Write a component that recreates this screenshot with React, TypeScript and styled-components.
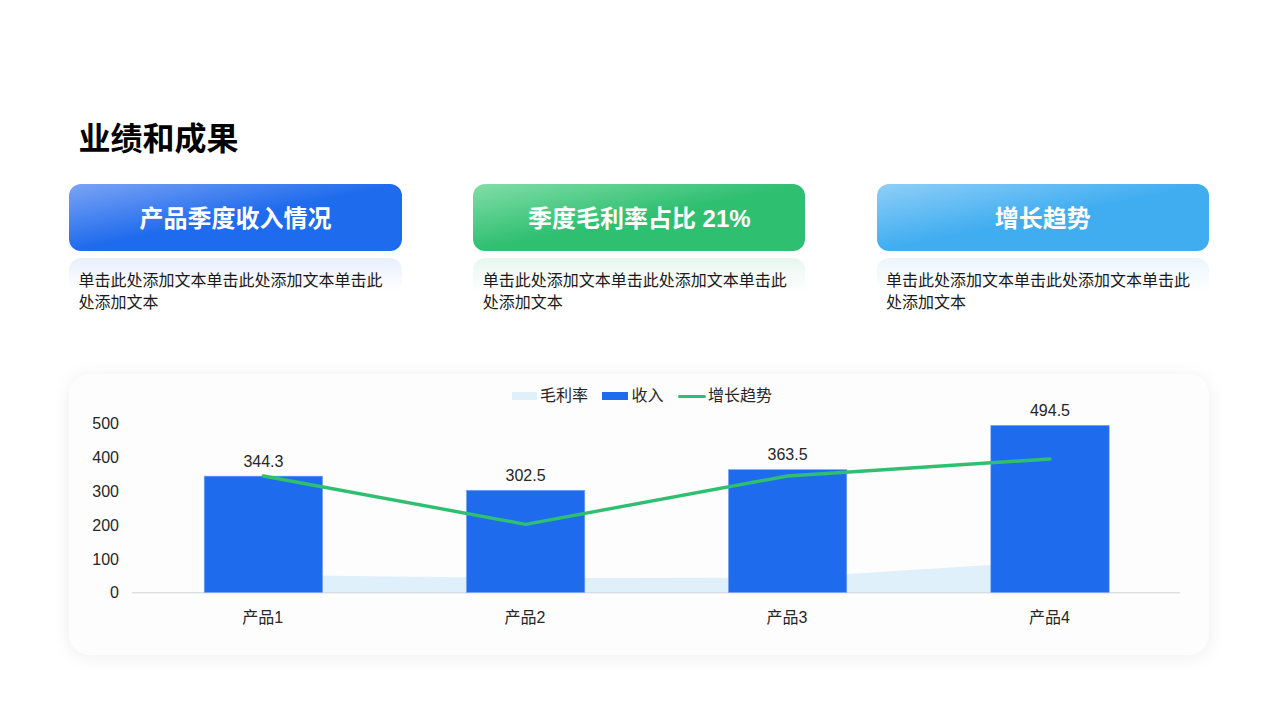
import React from 'react';
import styled, { createGlobalStyle } from 'styled-components';

const FONT = '"Liberation Sans", "Noto Sans CJK SC", sans-serif';

const cards = [
  { title: '产品季度收入情况', from: '#7ba4f5', to: '#1f6bed', tint: '#e8effc' },
  { title: '季度毛利率占比 21%', from: '#82dea8', to: '#2fbf71', tint: '#e9f6f0' },
  { title: '增长趋势', from: '#8fcff7', to: '#40adf1', tint: '#ebf5fd' },
];

const DESC = '单击此处添加文本单击此处添加文本单击此处添加文本';

// chart data, the coordinates below are page pixels
const BASE_Y = 592.5;
const UNIT = 0.338;
const products = [
  { name: '产品1', value: 344.3, cx: 263.4, margin: 575, trend: 476 },
  { name: '产品2', value: 302.5, cx: 525.6, margin: 578, trend: 524.3 },
  { name: '产品3', value: 363.5, cx: 787.6, margin: 577.8, trend: 476 },
  { name: '产品4', value: 494.5, cx: 1050, margin: 561.3, trend: 459 },
];
const ticks = [
  { label: '500', y: 429 },
  { label: '400', y: 463 },
  { label: '300', y: 497 },
  { label: '200', y: 531 },
  { label: '100', y: 565 },
  { label: '0', y: 598 },
];

function Chart() {
  const first = products[0];
  const last = products[products.length - 1];
  const area = [
    `${first.cx},${BASE_Y}`,
    ...products.map((p) => `${p.cx},${p.margin}`),
    `${last.cx},${BASE_Y}`,
  ].join(' ');
  const trend = products.map((p) => `${p.cx},${p.trend}`).join(' ');

  return (
    <Plot viewBox="69 407 1140 248">
      <polygon points={area} fill="#e0f0fb" />
      <line x1="132" x2="1180" y1={BASE_Y + 0.3} y2={BASE_Y + 0.3} stroke="#d0d2d5" strokeWidth="1" />
      {ticks.map((t) => (
        <AxisText key={t.label} x="119" y={t.y} textAnchor="end">
          {t.label}
        </AxisText>
      ))}
      {products.map((p) => {
        const h = p.value * UNIT;
        return (
          <g key={p.name}>
            <rect
              x={p.cx - 59.2}
              y={BASE_Y - h}
              width="118.4"
              height={h}
              fill="#1f6bed"
              stroke="#7ba6f4"
              strokeWidth="0.6"
            />
            <AxisText x={p.cx} y={BASE_Y - h - 9.5} textAnchor="middle">
              {p.value}
            </AxisText>
            <AxisText x={p.cx - 0.6} y="623" textAnchor="middle">
              {p.name}
            </AxisText>
          </g>
        );
      })}
      <polyline points={trend} fill="none" stroke="#2fbf71" strokeWidth="3.4" strokeLinecap="round" strokeLinejoin="round" />
    </Plot>
  );
}

function App() {
  return (
    <Page>
      <GlobalStyle />
      <Title>业绩和成果</Title>
      <CardGrid>
        {cards.map((c) => (
          <Column key={c.title}>
            <Header $from={c.from} $to={c.to}>
              {c.title}
            </Header>
            <Desc $tint={c.tint}>{DESC}</Desc>
          </Column>
        ))}
      </CardGrid>
      <ChartCard>
        <Legend>
          <LegendItem>
            <AreaSwatch />
            毛利率
          </LegendItem>
          <LegendItem>
            <BarSwatch />
            收入
          </LegendItem>
          <LegendItem>
            <LineSwatch />
            增长趋势
          </LegendItem>
        </Legend>
        <Chart />
      </ChartCard>
    </Page>
  );
}

export default App;

const GlobalStyle = createGlobalStyle`
  html, body {
    margin: 0;
    padding: 0;
    background: #fff;
  }
`;

const Page = styled.div`
  box-sizing: border-box;
  width: 1280px;
  height: 720px;
  padding: 117px 71px 0 69px;
  overflow: hidden;
  font-family: ${FONT};
  color: #1a1a1a;
`;

const Title = styled.h1`
  margin: 0 0 23px 9.5px;
  font-size: 32px;
  line-height: 44px;
  font-weight: 700;
  color: #000;
`;

const CardGrid = styled.div`
  display: grid;
  grid-template-columns: 333px 332px 332.5px;
  column-gap: 71.3px;
`;

const Column = styled.div`
  display: flex;
  flex-direction: column;
  gap: 7px;
`;

const Header = styled.div<{ $from: string; $to: string }>`
  display: flex;
  align-items: center;
  justify-content: center;
  box-sizing: border-box;
  height: 67px;
  padding: 0 0 2px 0;
  border-radius: 12px;
  font-size: 24px;
  font-weight: 700;
  color: #fff;
  background: linear-gradient(to bottom right, ${(p) => p.$from} 0%, ${(p) => p.$to} 50%);
`;

const Desc = styled.div<{ $tint: string }>`
  padding: 12px 9.5px 0;
  border-radius: 12px 12px 0 0;
  font-size: 16px;
  line-height: 22px;
  color: #1a1a1a;
  background: linear-gradient(to bottom, ${(p) => p.$tint}, #fff) no-repeat top / 100% 34px;
`;

const ChartCard = styled.div`
  box-sizing: border-box;
  width: 1140px;
  height: 281px;
  margin-top: 60px;
  padding-top: 11px;
  border-radius: 20px;
  background: #fdfdfd;
  box-shadow: 0 2px 18px rgba(0, 0, 0, 0.07);
`;

const Legend = styled.div`
  display: flex;
  justify-content: center;
  gap: 14.5px;
  padding-left: 6px;
  font-size: 16px;
  line-height: 22px;
  color: #262626;
`;

const LegendItem = styled.div`
  display: flex;
  align-items: center;
  gap: 3px;
`;

const AreaSwatch = styled.span`
  width: 25px;
  height: 8px;
  background: #e0f0fb;
`;

const BarSwatch = styled.span`
  width: 26px;
  height: 8px;
  background: #1f6bed;
`;

const LineSwatch = styled.span`
  width: 28px;
  height: 3px;
  margin-right: -1px;
  border-radius: 2px;
  background: #2fbf71;
`;

const Plot = styled.svg`
  display: block;
  width: 1140px;
  height: 248px;
  overflow: visible;
`;

const AxisText = styled.text`
  font-family: ${FONT};
  font-size: 16px;
  fill: #262626;
`;
